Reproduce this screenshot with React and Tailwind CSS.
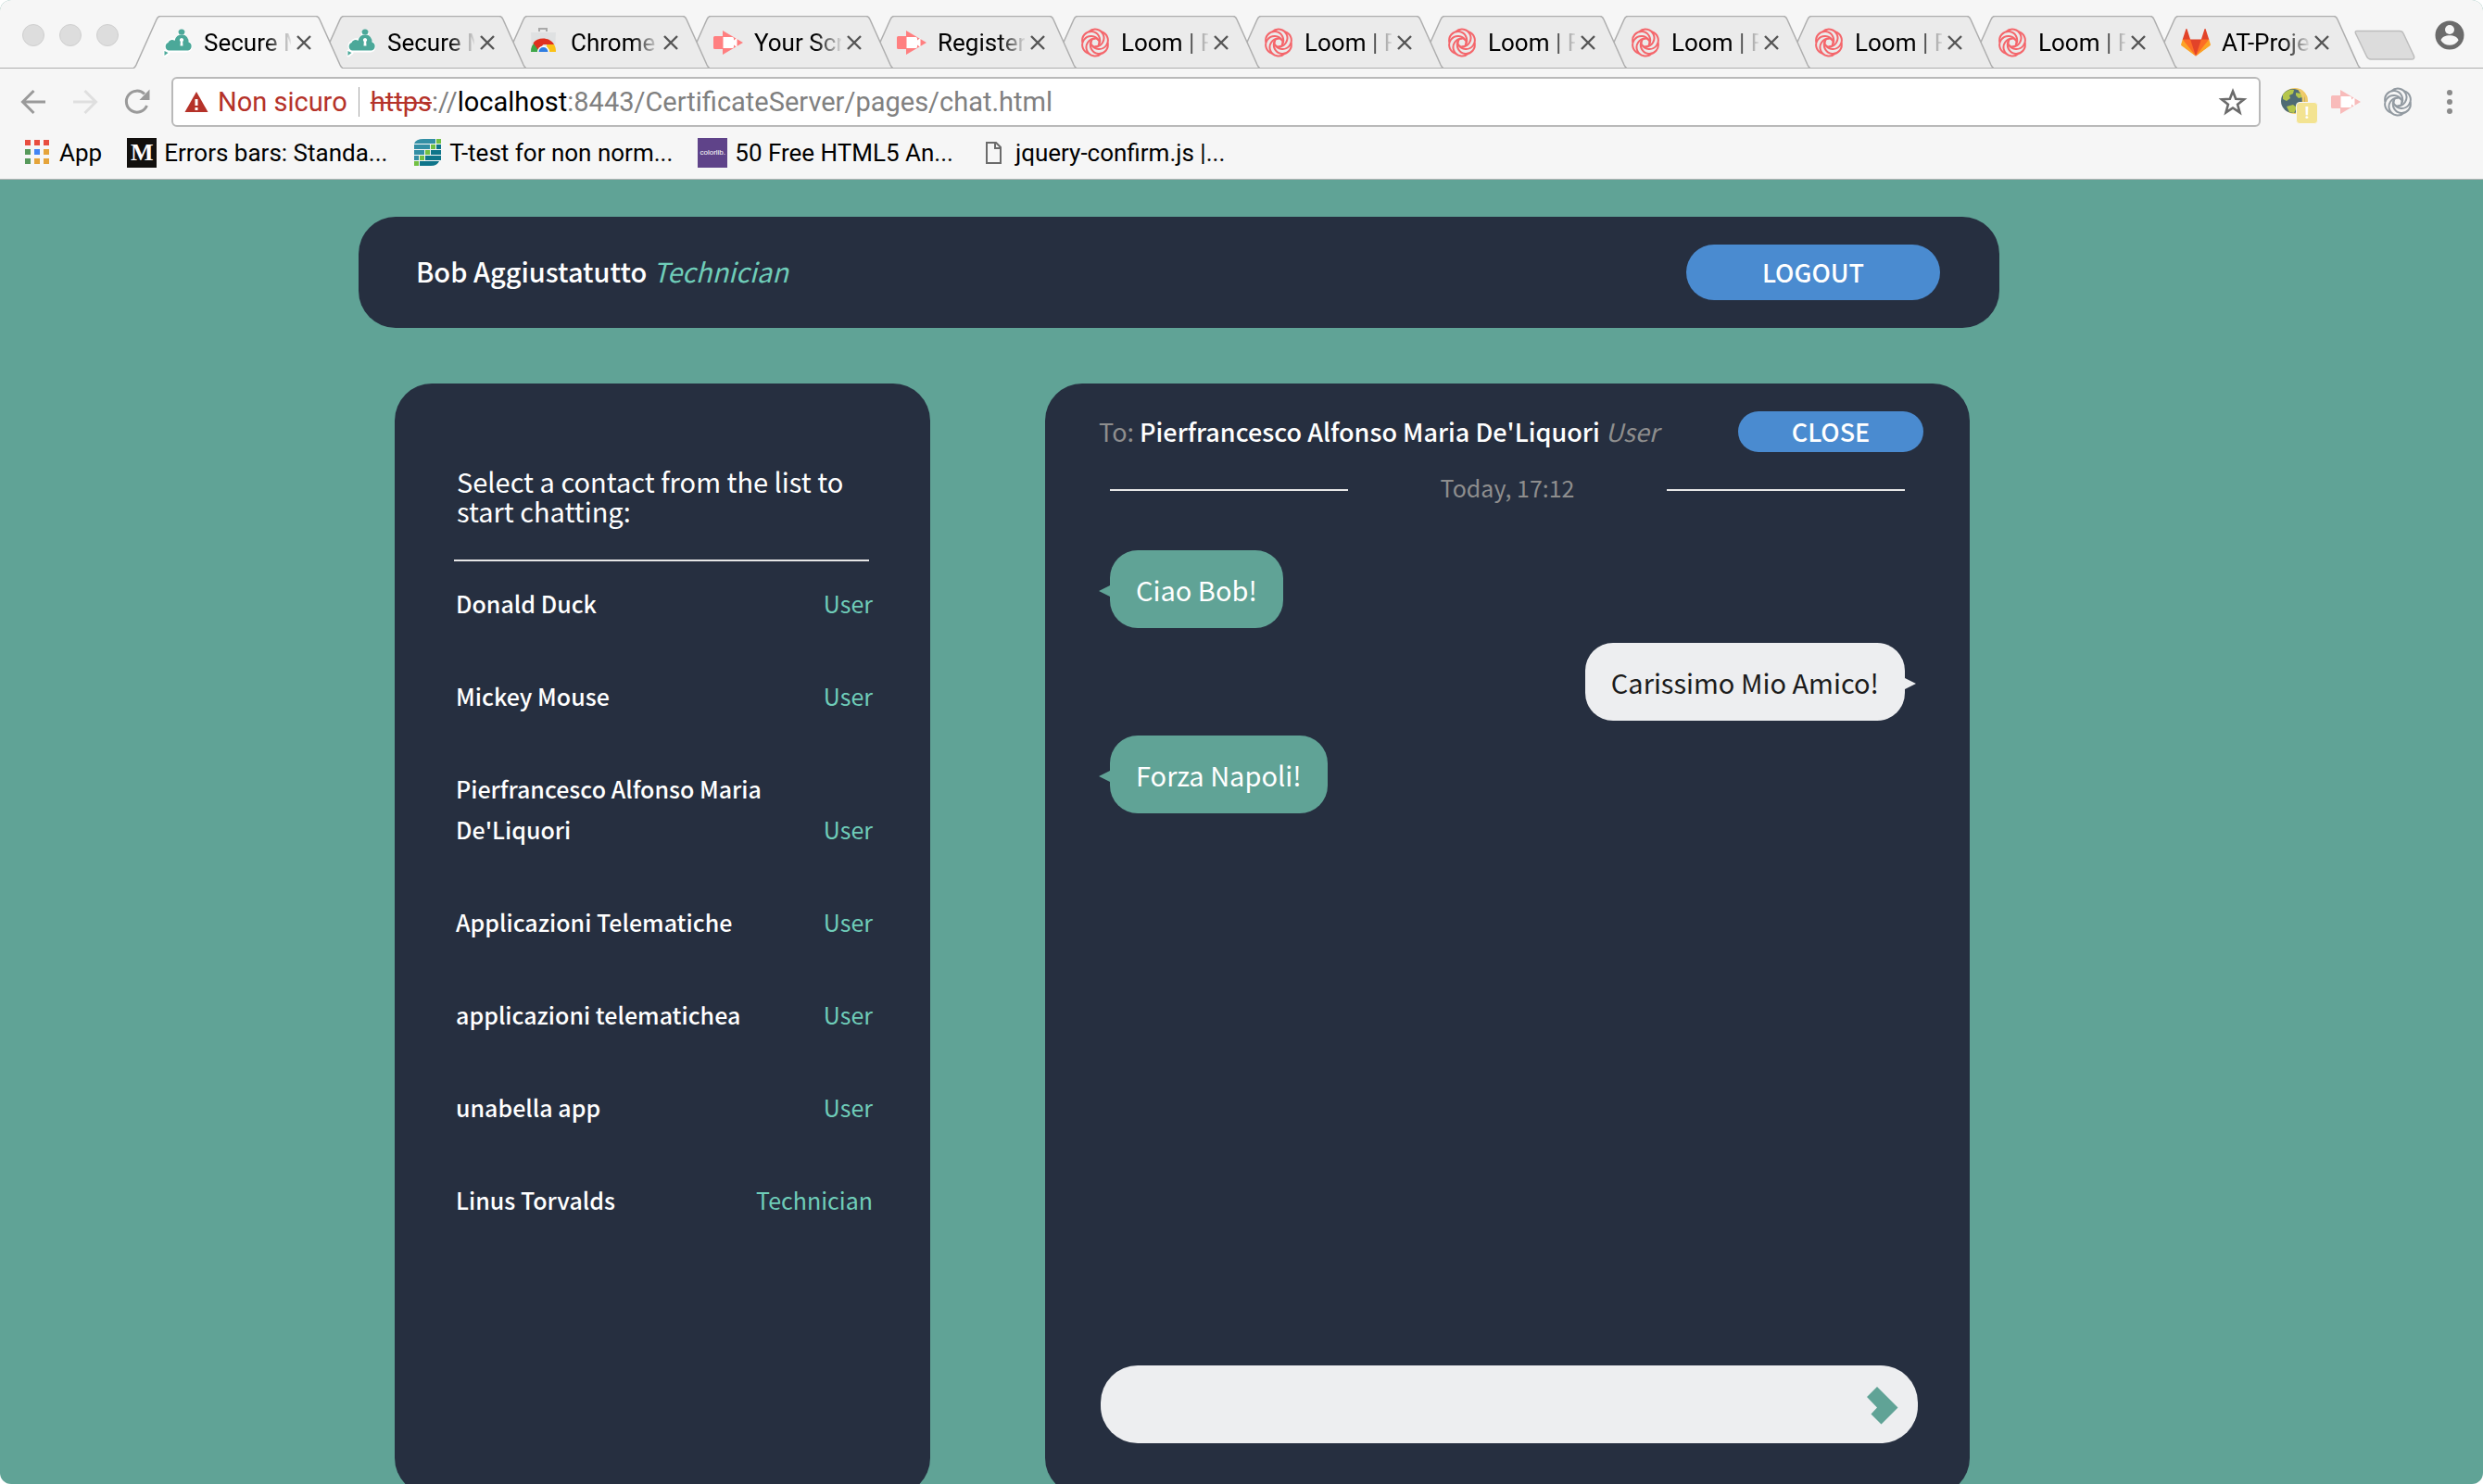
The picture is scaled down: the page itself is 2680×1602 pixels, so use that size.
import React from "react";

const CHROME_FONT = "font-['Roboto','Liberation_Sans',sans-serif]";
const PAGE_FONT = "font-['Noto_Sans_CJK_SC','Open_Sans',sans-serif]";

function CloudLogo() {
  return (
    <svg viewBox="0 0 32 32" className="size-8 shrink-0" aria-hidden="true">
      <g stroke="#ffffff" strokeWidth="3" strokeLinejoin="round" fill="#ffffff">
        <path d="M17 6a3.500 3.500 0 0 1 6 0l-1 2h-4z" />
        <path d="M7 25a5 5 0 0 1-1-9.500 5 5 0 0 1 7-2 7 7 0 0 1 13.500 2.500A4.600 4.600 0 0 1 26 25H10z" />
        <path d="M2 25v5l4-3z" />
      </g>
      <g fill="#4ba899">
        <path d="M16.500 5a3.500 3.500 0 0 1 7 0L22.500 7h-5z" />
        <path d="M6 24.500a4.500 4.500 0 0 1-.5-8.500 4.500 4.500 0 0 1 7-2 7.500 7.500 0 0 1 15 1.500 4.700 4.700 0 0 1-.5 9z" />
        <path d="M1.500 25v5l4-3z" />
      </g>
      <path d="M20 11a2.200 2.200 0 0 1 1.200 4l.3 4.500h-3l.3-4.500A2.200 2.200 0 0 1 20 11z" fill="#ffffff" />
    </svg>
  );
}

function StoreLogo() {
  return (
    <svg viewBox="0 0 32 32" className="size-8 shrink-0" aria-hidden="true">
      <path d="M10 4V1h8v3" fill="none" stroke="#a9a9a9" strokeWidth="2" />
      <path d="M1 5h27l-1 21H2z" fill="#dfe1e2" />
      <path d="M1 26a13.500 13.500 0 0 1 5-11l6 11z" fill="#3fa648" />
      <path d="M3.500 16.500C8 10 21 9.500 26 18H14.500L9 24z" fill="#e0301e" />
      <path d="M18 18h8c1.500 2.500 2 5 2 8h-9z" fill="#fbc116" />
      <path d="M8 26a6.500 6.500 0 0 1 13 0z" fill="#ffffff" />
      <path d="M9.500 26a5 5 0 0 1 10 0z" fill="#2f7de1" />
    </svg>
  );
}

function CastLogo({ color = "#ff7f80" }) {
  return (
    <svg viewBox="0 0 32 32" className="size-8 shrink-0" aria-hidden="true">
      <path d="M10 3l22 13-22 13v-6H1.500Q0 23 0 21.500v-11Q0 9 1.500 9H10z" fill={color} />
      <path d="M10.500 10h10q1.500 0 1.500 1.500v2l3.500-2.500v10l-3.500-2.500v2q0 1.500-1.500 1.500h-10z" fill="#ffffff" />
    </svg>
  );
}

function LoomLogo({ color = "#f4666b" }) {
  return (
    <svg viewBox="-16 -16 32 32" className="size-8 shrink-0" fill="none" stroke={color} strokeWidth="2" aria-hidden="true">
      {[0, 60, 120, 180, 240, 300].map((a) => (
        <path key={a} d="M-6.750-11.690A9.500 9.500 0 1 1 0 4.500" transform={`rotate(${a})`} />
      ))}
      <circle r="4.500" />
    </svg>
  );
}

function GitlabLogo() {
  return (
    <svg viewBox="0 0 36 36" className="size-8 shrink-0" aria-hidden="true">
      <path fill="#e24329" d="M2 14l9.380 9v-9l-4-12.280c-.205-.632-1.176-.632-1.380 0z" />
      <path fill="#e24329" d="M34 14l-9.380 9v-9l4-12.280c.205-.632 1.176-.632 1.380 0z" />
      <path fill="#e24329" d="M18 34.380L3 14h30z" />
      <path fill="#fc6d26" d="M18 34.380L11.380 14H2l4 11z" />
      <path fill="#fc6d26" d="M18 34.380L24.620 14H34l-4 11z" />
      <path fill="#fca326" d="M2 14L.1 20.160c-.18.565 0 1.200.5 1.560L18 34.380z" />
      <path fill="#fca326" d="M34 14l1.900 6.160c.18.565 0 1.200-.5 1.560L18 34.380z" />
    </svg>
  );
}

const TABS = [
  { title: "Secure Messaging", Logo: CloudLogo },
  { title: "Secure Messaging", Logo: CloudLogo },
  { title: "Chrome Web Store", Logo: StoreLogo },
  { title: "Your Screencast", Logo: CastLogo },
  { title: "Register", Logo: CastLogo },
  { title: "Loom | Record", Logo: LoomLogo },
  { title: "Loom | Record", Logo: LoomLogo },
  { title: "Loom | Record", Logo: LoomLogo },
  { title: "Loom | Record", Logo: LoomLogo },
  { title: "Loom | Record", Logo: LoomLogo },
  { title: "Loom | Record", Logo: LoomLogo },
  { title: "AT-Project", Logo: GitlabLogo },
];

function Tab({ title, Logo, active, order }) {
  return (
    <div className="relative -mr-7 h-[57px] w-[226px] shrink-0 pr-7 pl-8" style={{ zIndex: order }}>
      <svg viewBox="0 0 226 57" className="absolute inset-0 size-full" aria-hidden="true">
        <path
          d="M0 56.500C2 56 2.500 54 3 53L25 4Q26.500.5 29 .5H197Q199.500.5 201 4L223 53C223.500 54 224 56 226 56.500V57H0z"
          fill={active ? "#f6f6f6" : "#ebebeb"}
        />
        <path
          d="M0 56.500C2 56 2.500 54 3 53L25 4Q26.500.5 29 .5H197Q199.500.5 201 4L223 53C223.500 54 224 56 226 56.500"
          fill="none"
          stroke="#aeaeae"
          strokeWidth="1.500"
        />
        {!active && <path d="M0 56.500H226" stroke="#aeaeae" />}
      </svg>
      <div className="relative flex h-full items-center">
        <Logo />
        <button
          type="button"
          className="ml-3 w-[94px] shrink-0 overflow-hidden text-left text-[26px] leading-8 whitespace-nowrap text-black [mask-image:linear-gradient(to_right,black_66px,transparent_96px)]"
        >
          {title}
        </button>
        <button type="button" aria-label="Close tab" className="ml-[2px]">
          <svg viewBox="0 0 24 24" className="size-6" stroke="#555555" strokeWidth="2.400" aria-hidden="true">
            <path d="M5 5l14 14M19 5L5 19" />
          </svg>
        </button>
      </div>
    </div>
  );
}

function TabStrip() {
  return (
    <div className="relative flex h-[74px] items-end">
      <div className="absolute inset-x-0 bottom-0 h-px bg-[#aeaeae]" />
      <div className="flex h-full shrink-0 gap-4 pt-[26px] pr-4 pl-6">
        {["Close window", "Minimize window", "Zoom window"].map((label) => (
          <button key={label} type="button" aria-label={label} className="size-6 rounded-full border border-[#cfcfcf] bg-[#dddddd]" />
        ))}
      </div>
      {TABS.map((tab, i) => (
        <Tab key={i} {...tab} active={i === 0} order={TABS.length - i} />
      ))}
      <button type="button" aria-label="New tab" className="mb-2 ml-5 shrink-0">
        <svg viewBox="0 0 68 34" className="h-[34px] w-[68px]" aria-hidden="true">
          <path d="M4 1.500H50Q53 1.500 54 4L65.500 28.500Q66.500 32 63 32H19Q16 32 14.500 29L2.500 4Q1.500 1.500 4 1.500z" fill="#dcdcdc" stroke="#bdbdbd" strokeWidth="1.500" />
        </svg>
      </button>
      <button type="button" aria-label="Profile" className="mr-5 mb-5 ml-auto">
        <svg viewBox="0 0 32 32" className="size-8" aria-hidden="true">
          <circle cx="16" cy="16" r="15.500" fill="#6b6b6b" />
          <circle cx="16" cy="10" r="5" fill="#f6f6f6" />
          <path d="M6.500 21.500c1.500-7 17.500-7 19 0-4 7-15 7-19 0z" fill="#f6f6f6" />
        </svg>
      </button>
    </div>
  );
}

function Toolbar() {
  return (
    <div className="flex items-center pt-[9px] pr-5 pl-5">
      <div className="flex w-[165px] shrink-0 items-center gap-6">
        <button type="button" aria-label="Back">
          <svg viewBox="0 0 32 32" className="size-8" fill="none" stroke="#9a9a9a" strokeWidth="3" aria-hidden="true">
            <path d="M29 16H5M16.500 4L4.500 16l12 12" />
          </svg>
        </button>
        <button type="button" aria-label="Forward">
          <svg viewBox="0 0 32 32" className="size-8" fill="none" stroke="#dfdfdf" strokeWidth="3" aria-hidden="true">
            <path d="M3 16H27M15.500 4L27.500 16l-12 12" />
          </svg>
        </button>
        <button type="button" aria-label="Reload">
          <svg viewBox="0 0 32 32" className="size-8" fill="none" aria-hidden="true">
            <path d="M26.500 20A11.500 11.500 0 1 1 24 7.500" stroke="#9a9a9a" strokeWidth="3" />
            <path d="M29.500 2.500v11.500h-11z" fill="#9a9a9a" />
          </svg>
        </button>
      </div>
      <div className="flex h-[54px] min-w-0 flex-1 items-center rounded-md border-2 border-[#b9b9b9] bg-white px-3">
        <button type="button" className="flex shrink-0 items-center gap-[10px] text-[29px] leading-9 text-[#b53229]">
          <svg viewBox="0 0 26 24" className="h-6 w-[26px]" aria-hidden="true">
            <path d="M13 1l12.500 22H.5z" fill="#b53229" />
            <path d="M13 9v7M13 18v3" stroke="#ffffff" strokeWidth="3" />
          </svg>
          Non sicuro
        </button>
        <span className="mx-3 h-8 w-px shrink-0 bg-[#a5a5a5]" />
        <div
          role="textbox"
          aria-label="Address"
          contentEditable
          suppressContentEditableWarning
          className="min-w-0 flex-1 text-[29px] leading-9 whitespace-nowrap text-[#808080] outline-none"
        >
          <span className="text-[#b53229] line-through">https</span>://<span className="text-black">localhost</span>
          :8443/CertificateServer/pages/chat.html
        </div>
        <button type="button" aria-label="Bookmark this page">
          <svg viewBox="0 0 32 32" className="size-8" fill="none" stroke="#6b6b6b" strokeWidth="2.600" aria-hidden="true">
            <path d="M16 4.500l3.200 8.300 8.800.5-6.900 5.500 2.400 8.600L16 22.500l-7.500 4.900 2.400-8.600L4 13.300l8.800-.5z" />
          </svg>
        </button>
      </div>
      <div className="flex shrink-0 items-center gap-6 pl-5">
        <button type="button" aria-label="Site data extension" className="relative">
          <svg viewBox="0 0 32 32" className="size-8" aria-hidden="true">
            <circle cx="17" cy="15" r="14" fill="#f0c965" />
            <circle cx="15" cy="15" r="13" fill="#4f6b74" />
            <path d="M4 8c3-4 8-6 12-5l-1 4-4 2 1 3-4 3-4-2zM18 6l6 1 1 4-4 1-3-3zM8 21l7-2 4 3-3 6-5-1z" fill="#b5c64b" />
            <path d="M22 3c6 6 6 18-2 26" fill="none" stroke="#efcb6b" strokeWidth="3" />
          </svg>
          <span className="absolute top-4 left-[18px] size-6 rounded-sm border border-[#f6f6f6] bg-[#f3e391] text-[18px] leading-[22px] font-bold text-white">
            !
          </span>
        </button>
        <button type="button" aria-label="Screencast extension">
          <CastLogo color="#f8bbba" />
        </button>
        <button type="button" aria-label="Loom extension">
          <LoomLogo color="#929aa1" />
        </button>
        <button type="button" aria-label="Menu">
          <svg viewBox="0 0 32 32" className="size-8" fill="#8a8a8a" aria-hidden="true">
            <circle cx="16" cy="6" r="3" />
            <circle cx="16" cy="16" r="3" />
            <circle cx="16" cy="26" r="3" />
          </svg>
        </button>
      </div>
    </div>
  );
}

const APP_DOTS = ["#e84d3f", "#e84d3f", "#e84d3f", "#57995b", "#4285f4", "#e5a43a", "#57995b", "#e5a43a", "#e5a43a"];

function Bookmark({ icon, children }) {
  return (
    <a href="#" className="flex items-center gap-2 text-[26px] leading-8 whitespace-nowrap text-black">
      {icon}
      {children}
    </a>
  );
}

function Bookmarks() {
  return (
    <nav aria-label="Bookmarks" className="flex h-14 items-center gap-[27px] pl-6">
      <Bookmark
        icon={
          <svg viewBox="0 0 32 32" className="size-8" aria-hidden="true">
            {APP_DOTS.map((c, i) => (
              <rect key={i} x={3 + (i % 3) * 10} y={2 + Math.floor(i / 3) * 10} width="6" height="6" fill={c} />
            ))}
          </svg>
        }
      >
        App
      </Bookmark>
      <Bookmark
        icon={
          <span className="flex size-8 items-center justify-center bg-[#12100e] font-['Liberation_Serif',serif] text-[26px] font-bold text-white">
            M
          </span>
        }
      >
        Errors bars: Standa...
      </Bookmark>
      <Bookmark
        icon={
          <svg viewBox="0 0 32 32" className="size-8" aria-hidden="true">
            <path d="M12 1H25V6H2Q4 1 12 1zM2 7H19V12H2zM2 13H13V18H2zM2 19H7V24H2z" fill="#338fa5" />
            <path d="M25 7H31V12H25zM19 13H31V18H19zM13 19H31V24H13zM7 25H29Q27 30 20 30H7z" fill="#0f758a" />
            <path d="M26 1h5v5h-5zM20 7h5v5h-5zM14 13h5v5h-5zM8 19h5v5H8zM2 25h5v5H2z" fill="#72c043" />
            <path d="M0 6.500h32M0 12.500h32M0 18.500h32M0 24.500h32M25.500 0v12M19.500 6v12M13.500 12v12M7.500 18v14" stroke="#f6f6f6" />
          </svg>
        }
      >
        T-test for non norm...
      </Bookmark>
      <Bookmark
        icon={
          <span className="flex size-8 items-center justify-center overflow-hidden bg-[#5f4389] font-['Liberation_Sans',sans-serif] text-[8px] text-white">
            colorlib.
          </span>
        }
      >
        50 Free HTML5 An...
      </Bookmark>
      <Bookmark
        icon={
          <svg viewBox="0 0 32 32" className="size-8" fill="none" stroke="#6b6b6b" strokeWidth="2" aria-hidden="true">
            <path d="M9 5h10l5 5v17H9zM18 5v6h6" />
          </svg>
        }
      >
        jquery-confirm.js |...
      </Bookmark>
    </nav>
  );
}

const CONTACTS = [
  ["Donald Duck", "User"],
  ["Mickey Mouse", "User"],
  ["Pierfrancesco Alfonso Maria De'Liquori", "User"],
  ["Applicazioni Telematiche", "User"],
  ["applicazioni telematichea", "User"],
  ["unabella app", "User"],
  ["Linus Torvalds", "Technician"],
];

function Contacts() {
  return (
    <aside className="min-h-[1200px] rounded-[40px] bg-[#262f40] pt-[89px] pr-[62px] pl-16">
      <h2 className="pl-[3px] text-[29px] leading-8 text-white">Select a contact from the list to start chatting:</h2>
      <hr className="mt-[37px] mr-1 border-t-2 border-[#e6e6e6]" />
      <ul className="mt-[23px] flex flex-col gap-14 pl-[2px]">
        {CONTACTS.map(([name, role]) => (
          <li key={name}>
            <a href="#" className="flex items-end justify-between text-[25px] leading-[44px]">
              <span className="max-w-[350px] font-medium text-white">{name}</span>
              <span className="text-[#6fcdb9]">{role}</span>
            </a>
          </li>
        ))}
      </ul>
    </aside>
  );
}

function Message({ mine, children }) {
  return (
    <div className={mine ? "flex justify-end" : "flex"}>
      <div
        className={
          mine
            ? "relative rounded-[30px] bg-[#edeef0] px-7 py-5 text-[29px] leading-[44px] text-[#1b1b1b]"
            : "relative rounded-[30px] bg-[#60a396] px-7 py-5 text-[29px] leading-[44px] text-white"
        }
      >
        {children}
        <svg
          viewBox="0 0 12 24"
          className={mine ? "absolute top-8 -right-3 h-6 w-3" : "absolute top-8 -left-3 h-6 w-3"}
          fill={mine ? "#edeef0" : "#60a396"}
          aria-hidden="true"
        >
          <path d={mine ? "M0 6l12 6-12 6z" : "M12 6L0 12l12 6z"} />
        </svg>
      </div>
    </div>
  );
}

function Chat() {
  return (
    <section className="flex min-h-[1200px] flex-col rounded-[40px] bg-[#262f40] pt-[30px] pr-[50px] pb-14 pl-[58px]">
      <div className="flex items-center justify-between">
        <p className="text-[27px] leading-[44px] text-[#8e8e8e]">
          To: <strong className="font-medium text-white">Pierfrancesco Alfonso Maria De'Liquori</strong> <em>User</em>
        </p>
        <button type="button" className="h-11 w-[200px] rounded-full bg-[#4a8bd0] text-[27px] leading-[44px] font-medium text-white">
          CLOSE
        </button>
      </div>
      <div className="flex flex-1 flex-col pr-5 pl-3">
        <div className="mt-4 flex items-center justify-between">
          <hr className="w-[30%] border-t-2 border-[#e6e6e6]" />
          <time className="pb-[6px] text-[25px] leading-[44px] text-[#8e8e8e]">Today, 17:12</time>
          <hr className="w-[30%] border-t-2 border-[#e6e6e6]" />
        </div>
        <div className="mt-10 flex flex-col gap-4">
          <Message>Ciao Bob!</Message>
          <Message mine>Carissimo Mio Amico!</Message>
          <Message>Forza Napoli!</Message>
        </div>
      </div>
      <form className="mr-[6px] ml-[2px] flex h-[84px] items-center rounded-[40px] bg-[#edeef0] pr-4" onSubmit={(e) => e.preventDefault()}>
        <input type="text" aria-label="Message" className="h-full min-w-0 flex-1 bg-transparent pl-8 text-[29px] text-[#1b1b1b] outline-none" />
        <button type="submit" aria-label="Send">
          <svg viewBox="0 0 44 44" className="size-11" aria-hidden="true">
            <path d="M16 3l22.500 22.500L20.500 43.500 9.500 32.500l6.500-7L5 14z" fill="#60a396" />
          </svg>
        </button>
      </form>
    </section>
  );
}

export default function App() {
  return (
    <div className="h-screen bg-white">
      <div className="flex h-full flex-col overflow-hidden rounded-xl bg-[#60a396]">
        <header className={`${CHROME_FONT} shrink-0 border-b border-[#b5b5b5] bg-[#f6f6f6]`}>
          <TabStrip />
          <Toolbar />
          <Bookmarks />
        </header>
        <main className={`${PAGE_FONT} pt-10 pr-[522px] pl-[387px]`}>
          <div className="flex h-[120px] items-center justify-between rounded-[40px] bg-[#262f40] pr-16 pl-[62px]">
            <p className="pb-1 text-[29px] leading-[44px] text-white">
              <strong className="font-medium">Bob Aggiustatutto</strong> <em className="text-[#6fcdb9]">Technician</em>
            </p>
            <button type="button" className="h-[60px] w-[274px] rounded-full bg-[#4a8bd0] text-[27px] font-medium text-white">
              LOGOUT
            </button>
          </div>
          <div className="mt-[60px] grid grid-cols-[578fr_998fr] gap-[124px] pr-8 pl-[39px]">
            <Contacts />
            <Chat />
          </div>
        </main>
      </div>
    </div>
  );
}
